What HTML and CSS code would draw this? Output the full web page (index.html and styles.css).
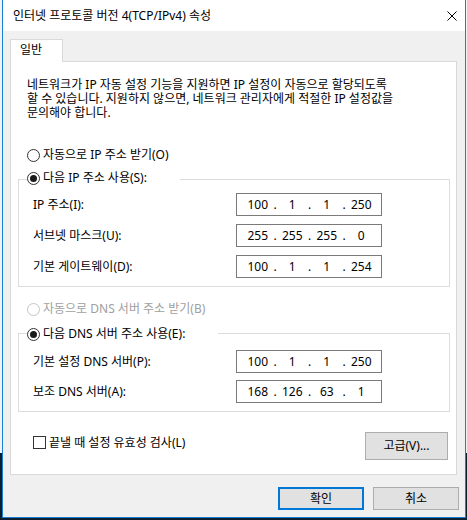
FILE: index.html
```html
<!DOCTYPE html>
<html lang="ko">
<head>
<meta charset="utf-8">
<link rel="stylesheet" href="styles.css">
</head>
<body>
<div class="window">
  <div class="titlebar">
    <span class="title">인터넷 프로토콜 버전 4(TCP/IPv4) 속성</span>
    <svg class="close" width="10" height="10" viewBox="0 0 10 10"><path d="M0.5 0.5L9.5 9.5M9.5 0.5L0.5 9.5" stroke="#000" stroke-width="1" fill="none"/></svg>
  </div>
  <div class="content">
    <div class="tabs"><div class="tab">일반</div></div>
    <div class="panel">
      <p class="desc">네트워크가 IP 자동 설정 기능을 지원하면 IP 설정이 자동으로 할당되도록<br>할 수 있습니다. 지원하지 않으면, 네트워크 관리자에게 적절한 IP 설정값을<br>문의해야 합니다.</p>
      <div class="radio-row r1"><span class="radio"></span><span class="rtext">자동으로 IP 주소 받기(O)</span></div>
      <div class="group g1">
        <div class="legend"><span class="radio checked"></span><span class="rtext">다음 IP 주소 사용(S):</span></div>
        <div class="rows">
          <div class="row"><span class="label">IP 주소(I):</span><div class="ip"><span class="seg">100</span><span class="dot">.</span><span class="seg">1</span><span class="dot">.</span><span class="seg">1</span><span class="dot">.</span><span class="seg">250</span></div></div>
          <div class="row"><span class="label">서브넷 마스크(U):</span><div class="ip"><span class="seg">255</span><span class="dot">.</span><span class="seg">255</span><span class="dot">.</span><span class="seg">255</span><span class="dot">.</span><span class="seg">0</span></div></div>
          <div class="row"><span class="label">기본 게이트웨이(D):</span><div class="ip"><span class="seg">100</span><span class="dot">.</span><span class="seg">1</span><span class="dot">.</span><span class="seg">1</span><span class="dot">.</span><span class="seg">254</span></div></div>
        </div>
      </div>
      <div class="radio-row r3 disabled"><span class="radio"></span><span class="rtext">자동으로 DNS 서버 주소 받기(B)</span></div>
      <div class="group g2">
        <div class="legend"><span class="radio checked"></span><span class="rtext">다음 DNS 서버 주소 사용(E):</span></div>
        <div class="rows">
          <div class="row"><span class="label">기본 설정 DNS 서버(P):</span><div class="ip"><span class="seg">100</span><span class="dot">.</span><span class="seg">1</span><span class="dot">.</span><span class="seg">1</span><span class="dot">.</span><span class="seg">250</span></div></div>
          <div class="row"><span class="label">보조 DNS 서버(A):</span><div class="ip"><span class="seg">168</span><span class="dot">.</span><span class="seg">126</span><span class="dot">.</span><span class="seg">63</span><span class="dot">.</span><span class="seg">1</span></div></div>
        </div>
      </div>
      <div class="bottom">
        <div class="check-row"><span class="checkbox"></span><span class="ctext">끝낼 때 설정 유효성 검사(L)</span></div>
        <button class="btn adv">고급(V)...</button>
      </div>
    </div>
    <div class="footer">
      <button class="btn ok">확인</button>
      <button class="btn cancel">취소</button>
    </div>
  </div>
</div>
</body>
</html>
```
FILE: styles.css
```css
html, body {
  margin: 0;
  padding: 0;
}
body {
  width: 467px;
  height: 520px;
  overflow: hidden;
  background: linear-gradient(#f2f2f2 0, #f2f2f2 453px, #0d1e2f 453px);
  font-family: "Noto Sans", "Noto Sans CJK KR", sans-serif;
  font-size: 12px;
  color: #000;
}
.window {
  margin-left: 2px;
  width: 464px;
  height: 518px;
  box-sizing: border-box;
  border: 1px solid #1a7fd4;
  border-top: none;
  background: #f0f0f0;
}
.titlebar {
  height: 31px;
  background: #fff;
  display: flex;
  align-items: center;
  justify-content: space-between;
  padding: 0 8px 0 10px;
}
.title {
  line-height: 16px;
}
.close {
  display: block;
}
.content {
  padding: 8px 8px 0 7px;
}
.tabs {
  display: flex;
  height: 22px;
}
.tab {
  position: relative;
  z-index: 1;
  width: 53px;
  height: 23px;
  box-sizing: border-box;
  border: 1px solid #d9d9d9;
  border-bottom: none;
  background: #fff;
  padding-left: 9px;
  line-height: 19px;
}
.panel {
  height: 414px;
  box-sizing: border-box;
  border: 1px solid #d9d9d9;
  background: #fff;
  padding: 0 6px 0 7px;
  display: flow-root;
}
.desc {
  margin: 16px 0 0 9px;
  line-height: 14px;
}
.radio-row {
  display: flex;
  align-items: center;
  height: 16px;
  margin-left: 9px;
}
.r1 {
  margin-top: 27px;
}
.r3 {
  margin-top: 14px;
}
.radio {
  width: 13px;
  height: 13px;
  box-sizing: border-box;
  border: 1px solid #333;
  border-radius: 50%;
  background: #fff;
  display: flex;
  align-items: center;
  justify-content: center;
  flex: none;
}
.radio.checked::after {
  content: "";
  width: 7px;
  height: 7px;
  border-radius: 50%;
  background: #1a1a1a;
}
.rtext {
  margin-left: 3px;
  line-height: 16px;
}
.disabled {
  color: #a0a0a0;
}
.disabled .radio {
  border-color: #c4c4c4;
}
.group {
  border: 1px solid #dcdcdc;
}
.g1 {
  margin-top: 16px;
}
.g2 {
  margin-top: 16px;
}
.legend {
  display: flex;
  align-items: center;
  width: max-content;
  height: 16px;
  margin-left: 8px;
  padding-right: 33px;
  background: #fff;
}
.g1 .legend {
  margin-top: -10px;
}
.g2 .legend {
  margin-top: -8px;
}
.rows {
  display: flex;
  flex-direction: column;
  padding: 0 0 8px 14px;
}
.g1 .rows {
  margin-top: 7px;
  gap: 8px;
}
.g2 .rows {
  margin-top: 8px;
  gap: 7px;
}
.row {
  display: flex;
  align-items: center;
  height: 23px;
}
.label {
  width: 203px;
  line-height: 16px;
}
.ip {
  width: 146px;
  height: 23px;
  box-sizing: border-box;
  border: 1px solid #7a7a7a;
  background: #fff;
  display: flex;
  align-items: center;
  padding-left: 7px;
}
.seg {
  width: 27.5px;
  text-align: center;
  line-height: 16px;
}
.dot {
  width: 7px;
  text-align: center;
  line-height: 16px;
}
.bottom {
  display: flex;
  justify-content: space-between;
  align-items: flex-start;
  margin-top: 20px;
  padding-right: 2px;
}
.check-row {
  display: flex;
  align-items: center;
  height: 13px;
  margin: 4px 0 0 15px;
}
.checkbox {
  width: 13px;
  height: 13px;
  box-sizing: border-box;
  border: 1px solid #333;
  background: #fff;
  flex: none;
}
.ctext {
  margin-left: 3px;
  line-height: 16px;
}
.btn {
  font-family: "Noto Sans", "Noto Sans CJK KR", sans-serif;
  font-size: 12px;
  color: #000;
  background: #e1e1e1;
  border: 1px solid #adadad;
  box-sizing: border-box;
  padding: 0;
  margin: 0;
  line-height: 16px;
}
.adv {
  width: 83px;
  height: 28px;
}
.footer {
  display: flex;
  justify-content: flex-end;
  gap: 9px;
  margin: 12px -2px 0 0;
}
.ok, .cancel {
  width: 86px;
  height: 23px;
}
.ok {
  border: 2px solid #0078d7;
}
```
